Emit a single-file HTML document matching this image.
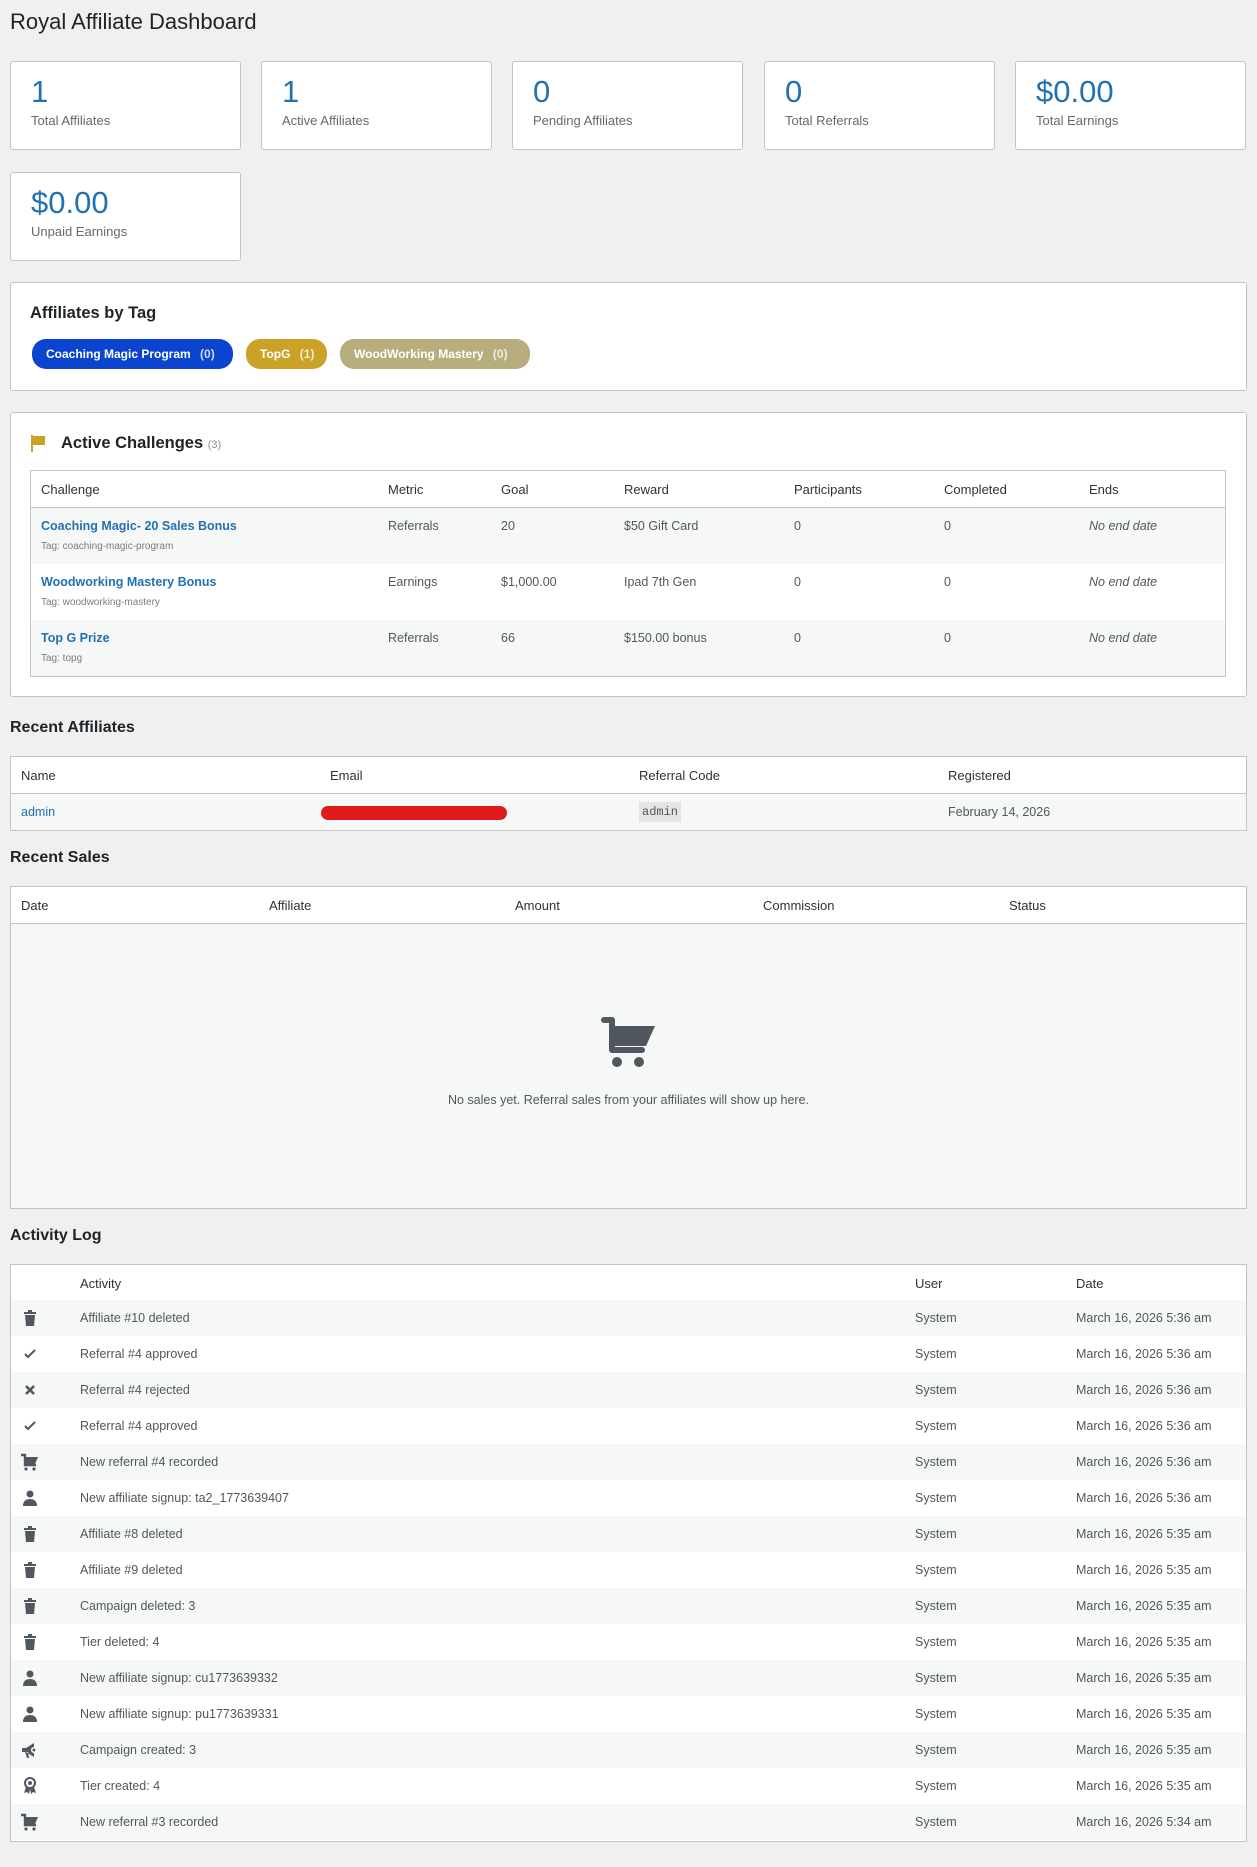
<!DOCTYPE html>
<html><head><meta charset="utf-8">
<style>
*{box-sizing:border-box;margin:0;padding:0}
body{width:1257px;height:1867px;background:#f0f0f1;font-family:"Liberation Sans",sans-serif;color:#50575e;position:relative;overflow:hidden}
.a{position:absolute}
h1{position:absolute;left:10px;top:9px;font-size:22px;font-weight:400;color:#1d2327}
.card{position:absolute;width:231px;height:89px;background:#fff;border:1px solid #c3c4c7;border-radius:3px}
.card .n{position:absolute;left:20px;top:12px;font-size:31px;color:#2271b1;font-weight:500}
.card .l{position:absolute;left:20px;top:51px;font-size:13px;color:#646970}
.box{position:absolute;left:10px;width:1237px;background:#fff;border:1px solid #c3c4c7;border-radius:3px}
.pill{position:absolute;top:339px;height:30px;border-radius:14px;color:#fff;font-size:12px;font-weight:bold;line-height:30px;padding-left:14px;white-space:nowrap}
.pill span{opacity:.8;margin-left:6px}
.h2{position:absolute;left:10px;font-size:16px;font-weight:bold;color:#1d2327}
.tbl{position:absolute;background:#fff;border:1px solid #c3c4c7}
.row{position:absolute;left:0;right:0;font-size:12.5px}
.row div{position:absolute}
.hd{background:#fff;border-bottom:1px solid #c3c4c7;color:#2c3338;font-size:13px}
.st{background:#f6f7f7}
a{color:#2271b1;text-decoration:none}
.ic{position:absolute;left:9px;width:20px;height:20px}
.log{font-size:12.5px}
</style></head><body>
<h1>Royal Affiliate Dashboard</h1>

<div class="card" style="left:10px;top:61px"><div class="n">1</div><div class="l">Total Affiliates</div></div>
<div class="card" style="left:261px;top:61px"><div class="n">1</div><div class="l">Active Affiliates</div></div>
<div class="card" style="left:512px;top:61px"><div class="n">0</div><div class="l">Pending Affiliates</div></div>
<div class="card" style="left:764px;top:61px"><div class="n">0</div><div class="l">Total Referrals</div></div>
<div class="card" style="left:1015px;top:61px"><div class="n">$0.00</div><div class="l">Total Earnings</div></div>
<div class="card" style="left:10px;top:172px"><div class="n">$0.00</div><div class="l">Unpaid Earnings</div></div>

<div class="box" style="top:282px;height:109px"></div>
<div class="a" style="left:30px;top:304px;font-size:16.5px;font-weight:bold;color:#1d2327">Affiliates by Tag</div>
<div class="pill" style="left:32px;width:201px;background:#0b45cf">Coaching Magic Program <span>(0)</span></div>
<div class="pill" style="left:246px;width:81px;background:#c9a227">TopG <span>(1)</span></div>
<div class="pill" style="left:340px;width:190px;background:#b8ad7c">WoodWorking Mastery <span>(0)</span></div>

<div class="box" style="top:412px;height:285px"></div>
<svg class="a" style="left:31px;top:435px" width="16" height="18" viewBox="0 0 16 18"><rect x="0" y="0" width="2" height="17" fill="#c9a227"/><rect x="2" y="1" width="12" height="9" fill="#c9a227"/></svg>
<div class="a" style="left:61px;top:434px;font-size:16.5px;font-weight:bold;color:#1d2327">Active Challenges <span style="font-size:11px;font-weight:400;color:#8c8f94">(3)</span></div>
<div class="tbl" style="left:30px;top:470px;width:1196px;height:207px">
 <div class="row hd" style="top:0;height:37px"><div style="left:10px;top:11px">Challenge</div><div style="left:357px;top:11px">Metric</div><div style="left:470px;top:11px">Goal</div><div style="left:593px;top:11px">Reward</div><div style="left:763px;top:11px">Participants</div><div style="left:913px;top:11px">Completed</div><div style="left:1058px;top:11px">Ends</div></div>
 <div class="row st" style="top:37px;height:56px"><div style="left:10px;top:11px"><a style="font-weight:bold">Coaching Magic- 20 Sales Bonus</a></div><div style="left:10px;top:33px;font-size:10px;color:#787c82">Tag: coaching-magic-program</div><div style="left:357px;top:11px">Referrals</div><div style="left:470px;top:11px">20</div><div style="left:593px;top:11px">$50 Gift Card</div><div style="left:763px;top:11px">0</div><div style="left:913px;top:11px">0</div><div style="left:1058px;top:11px;font-style:italic">No end date</div></div>
 <div class="row" style="top:93px;height:56px"><div style="left:10px;top:11px"><a style="font-weight:bold">Woodworking Mastery Bonus</a></div><div style="left:10px;top:33px;font-size:10px;color:#787c82">Tag: woodworking-mastery</div><div style="left:357px;top:11px">Earnings</div><div style="left:470px;top:11px">$1,000.00</div><div style="left:593px;top:11px">Ipad 7th Gen</div><div style="left:763px;top:11px">0</div><div style="left:913px;top:11px">0</div><div style="left:1058px;top:11px;font-style:italic">No end date</div></div>
 <div class="row st" style="top:149px;height:56px"><div style="left:10px;top:11px"><a style="font-weight:bold">Top G Prize</a></div><div style="left:10px;top:33px;font-size:10px;color:#787c82">Tag: topg</div><div style="left:357px;top:11px">Referrals</div><div style="left:470px;top:11px">66</div><div style="left:593px;top:11px">$150.00 bonus</div><div style="left:763px;top:11px">0</div><div style="left:913px;top:11px">0</div><div style="left:1058px;top:11px;font-style:italic">No end date</div></div>
</div>

<div class="h2" style="top:719px">Recent Affiliates</div>
<div class="tbl" style="left:10px;top:756px;width:1237px;height:75px">
 <div class="row hd" style="top:0;height:37px"><div style="left:10px;top:11px">Name</div><div style="left:319px;top:11px">Email</div><div style="left:628px;top:11px">Referral Code</div><div style="left:937px;top:11px">Registered</div></div>
 <div class="row st" style="top:37px;height:36px"><div style="left:10px;top:11px"><a>admin</a></div><div style="left:310px;top:12px;width:186px;height:14px;background:#e01b1b;border-radius:7px"></div><div style="left:628px;top:8px;background:#e4e4e4;padding:3px 3px;font-family:'Liberation Mono',monospace;font-size:12px">admin</div><div style="left:937px;top:11px">February 14, 2026</div></div>
</div>

<div class="h2" style="top:849px">Recent Sales</div>
<div class="tbl" style="left:10px;top:886px;width:1237px;height:323px;background:#f6f7f7">
 <div class="row hd" style="top:0;height:37px"><div style="left:10px;top:11px">Date</div><div style="left:258px;top:11px">Affiliate</div><div style="left:504px;top:11px">Amount</div><div style="left:752px;top:11px">Commission</div><div style="left:998px;top:11px">Status</div></div>
</div>
<svg class="a" style="left:600px;top:1016px" width="56" height="54" viewBox="0 0 56 54"><path d="M4 4h8v30h30" stroke="#50575e" stroke-width="6" stroke-linecap="round" stroke-linejoin="round" fill="none"/><path d="M12 10h43l-9 20H12z" fill="#50575e"/><circle cx="17" cy="46" r="5" fill="#50575e"/><circle cx="39" cy="46" r="5" fill="#50575e"/></svg>
<div class="a" style="left:0;width:1257px;top:1093px;text-align:center;font-size:12.5px">No sales yet. Referral sales from your affiliates will show up here.</div>

<div class="h2" style="top:1227px">Activity Log</div>
<div class="tbl" style="left:10px;top:1264px;width:1237px;height:578px">
 <div class="row hd" style="top:0;height:36px"><div style="left:69px;top:11px">Activity</div><div style="left:904px;top:11px">User</div><div style="left:1065px;top:11px">Date</div></div>
</div>
<div class="a log" style="left:11px;top:1300px;width:1235px">
<div style="position:relative;height:36px;background:#f6f7f7"><svg class="ic" style="top:8px" viewBox="0 0 20 20"><path d="M4 4h12v2H4zM8 2h4v2H8zM5 7h10l-1 11H6z" fill="#50575e"/></svg><span class="a" style="left:69px;top:11px">Affiliate #10 deleted</span><span class="a" style="left:904px;top:11px">System</span><span class="a" style="left:1065px;top:11px">March 16, 2026 5:36 am</span></div>
<div style="position:relative;height:36px;background:#fff"><svg class="ic" style="top:8px" viewBox="0 0 20 20"><path d="M5 10l3 3 7-7" stroke="#50575e" stroke-width="2" fill="none"/></svg><span class="a" style="left:69px;top:11px">Referral #4 approved</span><span class="a" style="left:904px;top:11px">System</span><span class="a" style="left:1065px;top:11px">March 16, 2026 5:36 am</span></div>
<div style="position:relative;height:36px;background:#f6f7f7"><svg class="ic" style="top:8px" viewBox="0 0 20 20"><path d="M6 6l8 8M14 6l-8 8" stroke="#50575e" stroke-width="2.6" fill="none"/></svg><span class="a" style="left:69px;top:11px">Referral #4 rejected</span><span class="a" style="left:904px;top:11px">System</span><span class="a" style="left:1065px;top:11px">March 16, 2026 5:36 am</span></div>
<div style="position:relative;height:36px;background:#fff"><svg class="ic" style="top:8px" viewBox="0 0 20 20"><path d="M5 10l3 3 7-7" stroke="#50575e" stroke-width="2" fill="none"/></svg><span class="a" style="left:69px;top:11px">Referral #4 approved</span><span class="a" style="left:904px;top:11px">System</span><span class="a" style="left:1065px;top:11px">March 16, 2026 5:36 am</span></div>
<div style="position:relative;height:36px;background:#f6f7f7"><svg class="ic" style="top:8px" viewBox="0 0 20 20"><path d="M1 3h4v10h11" stroke="#50575e" stroke-width="2.4" fill="none"/><path d="M5 5h13l-3 7H5z" fill="#50575e"/><circle cx="6" cy="17" r="1.6" fill="#50575e"/><circle cx="14" cy="17" r="1.6" fill="#50575e"/></svg><span class="a" style="left:69px;top:11px">New referral #4 recorded</span><span class="a" style="left:904px;top:11px">System</span><span class="a" style="left:1065px;top:11px">March 16, 2026 5:36 am</span></div>
<div style="position:relative;height:36px;background:#fff"><svg class="ic" style="top:8px" viewBox="0 0 20 20"><circle cx="10" cy="6" r="3.5" fill="#50575e"/><path d="M3 18c0-5 3-7 7-7s7 2 7 7z" fill="#50575e"/></svg><span class="a" style="left:69px;top:11px">New affiliate signup: ta2_1773639407</span><span class="a" style="left:904px;top:11px">System</span><span class="a" style="left:1065px;top:11px">March 16, 2026 5:36 am</span></div>
<div style="position:relative;height:36px;background:#f6f7f7"><svg class="ic" style="top:8px" viewBox="0 0 20 20"><path d="M4 4h12v2H4zM8 2h4v2H8zM5 7h10l-1 11H6z" fill="#50575e"/></svg><span class="a" style="left:69px;top:11px">Affiliate #8 deleted</span><span class="a" style="left:904px;top:11px">System</span><span class="a" style="left:1065px;top:11px">March 16, 2026 5:35 am</span></div>
<div style="position:relative;height:36px;background:#fff"><svg class="ic" style="top:8px" viewBox="0 0 20 20"><path d="M4 4h12v2H4zM8 2h4v2H8zM5 7h10l-1 11H6z" fill="#50575e"/></svg><span class="a" style="left:69px;top:11px">Affiliate #9 deleted</span><span class="a" style="left:904px;top:11px">System</span><span class="a" style="left:1065px;top:11px">March 16, 2026 5:35 am</span></div>
<div style="position:relative;height:36px;background:#f6f7f7"><svg class="ic" style="top:8px" viewBox="0 0 20 20"><path d="M4 4h12v2H4zM8 2h4v2H8zM5 7h10l-1 11H6z" fill="#50575e"/></svg><span class="a" style="left:69px;top:11px">Campaign deleted: 3</span><span class="a" style="left:904px;top:11px">System</span><span class="a" style="left:1065px;top:11px">March 16, 2026 5:35 am</span></div>
<div style="position:relative;height:36px;background:#fff"><svg class="ic" style="top:8px" viewBox="0 0 20 20"><path d="M4 4h12v2H4zM8 2h4v2H8zM5 7h10l-1 11H6z" fill="#50575e"/></svg><span class="a" style="left:69px;top:11px">Tier deleted: 4</span><span class="a" style="left:904px;top:11px">System</span><span class="a" style="left:1065px;top:11px">March 16, 2026 5:35 am</span></div>
<div style="position:relative;height:36px;background:#f6f7f7"><svg class="ic" style="top:8px" viewBox="0 0 20 20"><circle cx="10" cy="6" r="3.5" fill="#50575e"/><path d="M3 18c0-5 3-7 7-7s7 2 7 7z" fill="#50575e"/></svg><span class="a" style="left:69px;top:11px">New affiliate signup: cu1773639332</span><span class="a" style="left:904px;top:11px">System</span><span class="a" style="left:1065px;top:11px">March 16, 2026 5:35 am</span></div>
<div style="position:relative;height:36px;background:#fff"><svg class="ic" style="top:8px" viewBox="0 0 20 20"><circle cx="10" cy="6" r="3.5" fill="#50575e"/><path d="M3 18c0-5 3-7 7-7s7 2 7 7z" fill="#50575e"/></svg><span class="a" style="left:69px;top:11px">New affiliate signup: pu1773639331</span><span class="a" style="left:904px;top:11px">System</span><span class="a" style="left:1065px;top:11px">March 16, 2026 5:35 am</span></div>
<div style="position:relative;height:36px;background:#f6f7f7"><svg class="ic" style="top:8px" viewBox="0 0 20 20"><path d="M2 8h4l8-5v14l-8-5H2zM5 12l2 6h2l-1-6z" fill="#50575e"/><circle cx="14" cy="10" r="3" fill="#fff"/><circle cx="14" cy="10" r="1.5" fill="#50575e"/></svg><span class="a" style="left:69px;top:11px">Campaign created: 3</span><span class="a" style="left:904px;top:11px">System</span><span class="a" style="left:1065px;top:11px">March 16, 2026 5:35 am</span></div>
<div style="position:relative;height:36px;background:#fff"><svg class="ic" style="top:8px" viewBox="0 0 20 20"><circle cx="10" cy="7" r="5" fill="none" stroke="#50575e" stroke-width="2"/><circle cx="10" cy="7" r="2" fill="#50575e"/><path d="M6 11l-2 6 3-1 2 2 1-5M14 11l2 6-3-1-2 2-1-5" fill="#50575e"/></svg><span class="a" style="left:69px;top:11px">Tier created: 4</span><span class="a" style="left:904px;top:11px">System</span><span class="a" style="left:1065px;top:11px">March 16, 2026 5:35 am</span></div>
<div style="position:relative;height:36px;background:#f6f7f7"><svg class="ic" style="top:8px" viewBox="0 0 20 20"><path d="M1 3h4v10h11" stroke="#50575e" stroke-width="2.4" fill="none"/><path d="M5 5h13l-3 7H5z" fill="#50575e"/><circle cx="6" cy="17" r="1.6" fill="#50575e"/><circle cx="14" cy="17" r="1.6" fill="#50575e"/></svg><span class="a" style="left:69px;top:11px">New referral #3 recorded</span><span class="a" style="left:904px;top:11px">System</span><span class="a" style="left:1065px;top:11px">March 16, 2026 5:34 am</span></div>
</div>
</body></html>
